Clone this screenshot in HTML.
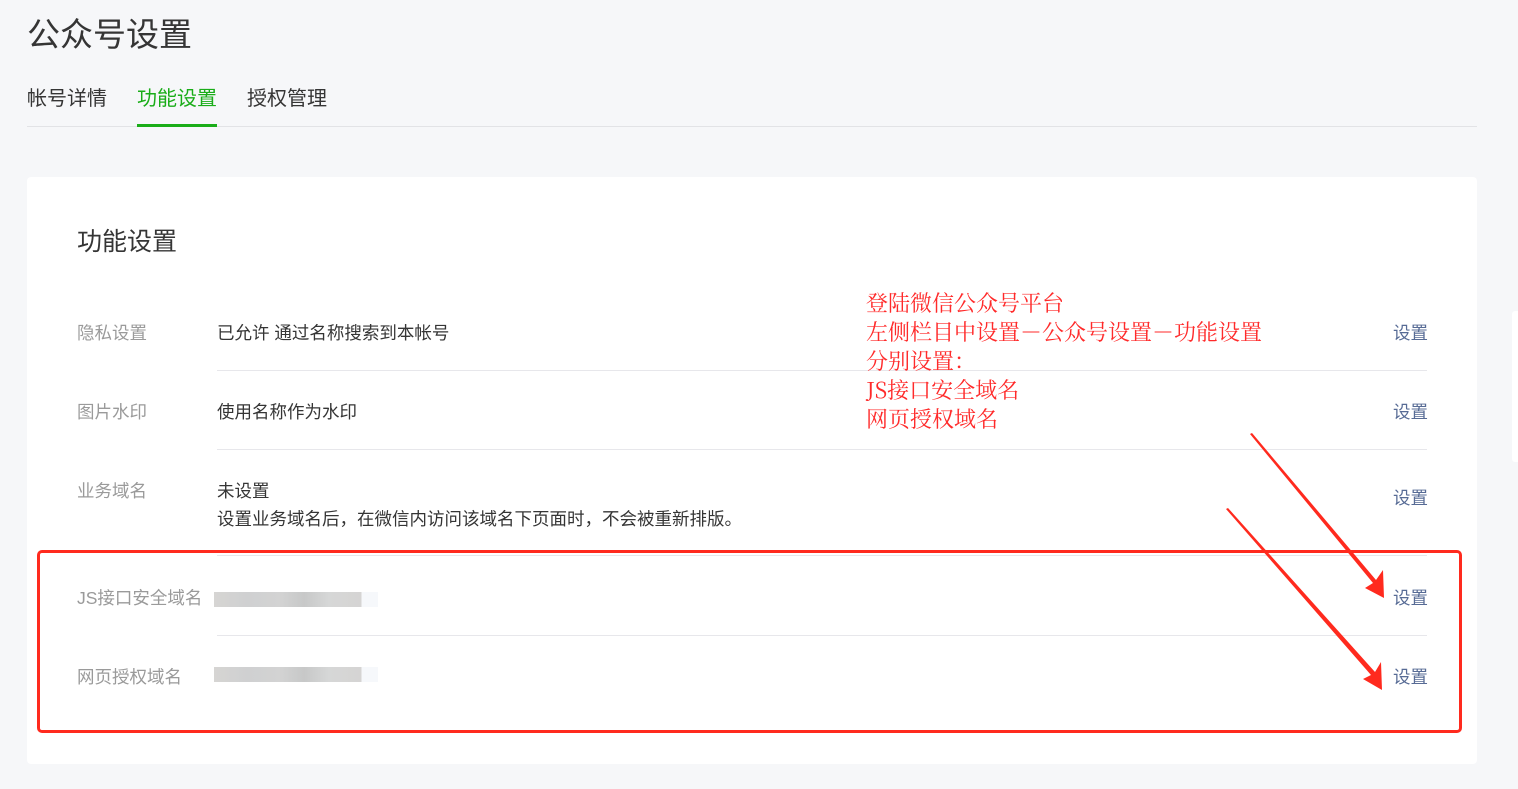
<!DOCTYPE html>
<html><head><meta charset="utf-8"><style>
*{margin:0;padding:0;box-sizing:border-box}
body{width:1518px;height:789px;background:#f6f7f9;font-family:"Liberation Sans","Noto Sans CJK SC",sans-serif;position:relative;overflow:hidden;color:#353535}
.a{position:absolute;white-space:nowrap}
.h1{left:27px;top:15px;font-size:33px;line-height:40px;color:#353535}
.tab{top:86px;font-size:20px;line-height:26px}
.card{position:absolute;left:27px;top:177px;width:1450px;height:587px;background:#fff;border-radius:4px}
.lbl{font-size:17.5px;color:#9a9a9a;line-height:24px}
.val{font-size:17.5px;color:#353535;line-height:24px}
.set{font-size:17.5px;color:#576b95;line-height:24px;left:1393px}
.div{position:absolute;left:217px;width:1210px;height:1px;background:#e7e7eb}
.red{font-family:"Noto Serif CJK SC","Liberation Serif",serif;color:#ff2a2a;font-size:22px;line-height:29px;left:866px;top:288px}
.blur{position:absolute;height:15px;background:linear-gradient(90deg,#d6d5d3,#cfd0d1 20%,#d3d3d3 40%,#c7c8c8 55%,#d6d7d7 70%,#d5d4d3 90%,#f6f8fb 90%)}
</style></head><body>
<div class="a h1">公众号设置</div>
<div class="a tab" style="left:27px">帐号详情</div>
<div class="a tab" style="left:137px;color:#1aad19">功能设置</div>
<div class="a tab" style="left:247px">授权管理</div>
<div class="a" style="left:27px;top:126px;width:1450px;height:1px;background:#e2e3e6"></div>
<div class="a" style="left:137px;top:124px;width:80px;height:3px;background:#1aad19"></div>
<div class="card"></div>
<div class="a" style="left:1512px;top:311px;width:6px;height:151px;background:#fff;border-radius:3px 0 0 3px"></div>
<div class="a" style="left:77px;top:227px;font-size:25px;line-height:30px;color:#353535">功能设置</div>

<div class="a lbl" style="left:77px;top:321px">隐私设置</div>
<div class="a val" style="left:217px;top:321px">已允许 通过名称搜索到本帐号</div>
<div class="a set" style="top:321px">设置</div>
<div class="div" style="top:370px"></div>

<div class="a lbl" style="left:77px;top:400px">图片水印</div>
<div class="a val" style="left:217px;top:400px">使用名称作为水印</div>
<div class="a set" style="top:400px">设置</div>
<div class="div" style="top:449px"></div>

<div class="a lbl" style="left:77px;top:479px">业务域名</div>
<div class="a val" style="left:217px;top:479px">未设置</div>
<div class="a val" style="left:217px;top:507px">设置业务域名后，在微信内访问该域名下页面时，不会被重新排版。</div>
<div class="a set" style="top:486px">设置</div>
<div class="div" style="top:555px"></div>

<div class="a lbl" style="left:77px;top:586px">JS接口安全域名</div>
<div class="blur" style="left:214px;top:592px;width:164px"></div>
<div class="a set" style="top:586px">设置</div>
<div class="div" style="top:635px"></div>

<div class="a lbl" style="left:77px;top:665px">网页授权域名</div>
<div class="blur" style="left:214px;top:667px;width:164px"></div>
<div class="a set" style="top:665px">设置</div>

<div class="a red">登陆微信公众号平台<br>左侧栏目中设置－公众号设置－功能设置<br>分别设置：<br>JS接口安全域名<br>网页授权域名</div>

<div class="a" style="left:37px;top:550px;width:1425px;height:183px;border:3px solid #ff2a1e;border-radius:5px"></div>
<svg class="a" style="left:0;top:0" width="1518" height="789">
<polygon points="1250,434 1252,433 1376,580 1383,570 1384,598 1365,588 1373,583" fill="#ff2a1e"/>
<polygon points="1226,509 1228,508 1375,672 1381,662 1382,690 1363,679 1371,675" fill="#ff2a1e"/>
</svg>
</body></html>
